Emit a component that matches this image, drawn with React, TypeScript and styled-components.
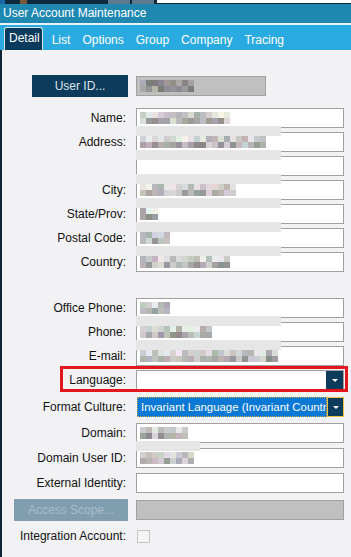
import React from 'react';
import styled, { createGlobalStyle } from 'styled-components';

const GlobalStyle = createGlobalStyle`
	html, body {
		margin: 0;
		padding: 0;
		background: #f2f2f4;
	}
	body {
		font-family: "Liberation Sans", Arial, sans-serif;
		font-size: 12px;
		color: #111;
		width: 351px;
		height: 557px;
		overflow: hidden;
	}
`;

const Window = styled.div`
	width: 351px;
	height: 557px;
	display: flex;
	flex-direction: column;
`;

const TopStrip = styled.div`
	height: 4px;
	background: #0b2a40;
	display: flex;
	align-items: stretch;
`;

const StripItem = styled.div<{ $ml: number; $w: number; $bg: string }>`
	margin-left: ${(p) => p.$ml}px;
	width: ${(p) => p.$w}px;
	background: ${(p) => p.$bg};
	flex: none;
`;

const StripSearch = styled.div`
	margin-left: 3px;
	flex: 1;
	background: #fff;
	border-bottom: 1px solid #0b2a40;
`;

const TitleBar = styled.div`
	height: 19px;
	line-height: 19px;
	background: #1f88b1;
	color: #fff;
	padding-left: 3px;
	font-size: 12px;
`;

const Separator = styled.div`
	height: 2px;
	background: #eaf3f7;
`;

const TabBar = styled.div`
	height: 25px;
	background: #29abe2;
	display: flex;
	align-items: flex-end;
	padding-left: 4px;
`;

const Tab = styled.div<{ $active?: boolean }>`
	height: 23px;
	box-sizing: border-box;
	color: #fff;
	font-size: 12px;
	line-height: 20px;
	padding: ${(p) => (p.$active ? '0 2px 0 4px' : '3px 6px 0')};
	margin-right: ${(p) => (p.$active ? '3px' : '0')};
	background: ${(p) => (p.$active ? '#0a3a5c' : 'transparent')};
	border: ${(p) => (p.$active ? '1px solid #d6e6ef' : 'none')};
	border-bottom: none;
	border-radius: ${(p) => (p.$active ? '3px 3px 0 0' : '0')};
`;

const Content = styled.div`
	flex: 1;
	border-left: 2px solid #0e2436;
	background: #f2f2f4;
	padding: 25px 0 0 12px;
	display: flex;
	flex-direction: column;
	overflow: hidden;
`;

const Row = styled.div<{ $mt?: number; $h?: number }>`
	position: relative;
	display: flex;
	align-items: center;
	gap: 8px;
	margin-top: ${(p) => p.$mt ?? 4}px;
	height: ${(p) => p.$h ?? 20}px;
	flex: none;
`;

const Label = styled.div`
	width: 112px;
	padding-right: 2px;
	text-align: right;
	white-space: nowrap;
	font-size: 12px;
	color: #111;
`;

const Field = styled.div<{ $w?: number; $bg?: string }>`
	position: relative;
	box-sizing: border-box;
	width: ${(p) => p.$w ?? 208}px;
	height: 20px;
	border: 1px solid #a0a0a0;
	background: ${(p) => p.$bg ?? '#fff'};
	display: flex;
	justify-content: flex-end;
`;

const ActionButton = styled.div<{ $disabled?: boolean; $ml?: number; $w: number }>`
	box-sizing: border-box;
	margin-left: ${(p) => p.$ml ?? 0}px;
	width: ${(p) => p.$w}px;
	height: 22px;
	line-height: 22px;
	text-align: center;
	font-size: 12px;
	background: ${(p) => (p.$disabled ? '#809eb0' : '#0d3b5c')};
	color: ${(p) => (p.$disabled ? '#a9bdca' : '#dce6ee')};
`;

const MosaicGrid = styled.div<{ $cols: number; $top: number }>`
	position: absolute;
	left: 3px;
	top: ${(p) => p.$top}px;
	display: grid;
	grid-template-columns: repeat(${(p) => p.$cols}, 6px);
	grid-auto-rows: 6px;
`;

const Cell = styled.span`
	display: block;
`;

const Band = styled.div<{ $w: number }>`
	position: absolute;
	left: -1px;
	top: 17px;
	width: ${(p) => p.$w}px;
	height: 10px;
	background: #e6e6e6;
	z-index: 1;
`;

const DropButton = styled.div<{ $focus?: boolean }>`
	box-sizing: border-box;
	width: 17px;
	height: 100%;
	background: #0d3b5c;
	border: ${(p) => (p.$focus ? '1px solid #efc243' : 'none')};
	display: flex;
	align-items: center;
	justify-content: center;
	flex: none;

	&::after {
		content: '';
		border-left: 3px solid transparent;
		border-right: 3px solid transparent;
		border-top: 3px solid #fff;
	}
`;

const Highlight = styled.div`
	position: absolute;
	left: 46px;
	top: -4px;
	width: 288px;
	height: 26px;
	box-sizing: border-box;
	border: 3px solid #e3161e;
	pointer-events: none;
`;

const Select = styled.div`
	display: flex;
	width: 207px;
	height: 20px;
	margin-left: 1px;
`;

const SelectedText = styled.div`
	box-sizing: border-box;
	width: 190px;
	height: 100%;
	background: #0a78d4;
	border: 1px dotted #c8a848;
	color: #fff;
	font-size: 11.4px;
	line-height: 18px;
	padding-left: 3px;
	white-space: nowrap;
	overflow: hidden;
`;

const Checkbox = styled.div`
	box-sizing: border-box;
	width: 13px;
	height: 13px;
	margin-left: 1px;
	border: 1px solid #c4c4c4;
	background: #f4f4f5;
`;

const rng = (seed: number) => {
	let s = seed * 7919 + 13;
	return () => {
		s = (s * 9301 + 49297) % 233280;
		return s / 233280;
	};
};

const Mosaic = ({ w, seed, dark }: { w: number; seed: number; dark?: boolean }) => {
	const rand = rng(seed);
	const cols = Math.ceil(w / 6);
	const cells: string[] = [];
	for (let r = 0; r < 2; r++) {
		for (let c = 0; c < cols; c++) {
			const base = dark ? 120 + rand() * 60 : r === 0 ? 170 + rand() * 70 : 140 + rand() * 80;
			const tint = () => Math.round(base + rand() * 18 - 9);
			cells.push(`rgb(${tint()}, ${tint()}, ${tint()})`);
		}
	}
	return (
		<MosaicGrid $cols={cols} $top={dark ? 3 : 3}>
			{cells.map((c, i) => (
				<Cell key={i} style={{ background: c }} />
			))}
		</MosaicGrid>
	);
};

type FieldRowProps = { label: string; mt?: number; blur?: number; band?: number; seed?: number };

const FieldRow = ({ label, mt, blur, band, seed = 1 }: FieldRowProps) => (
	<Row $mt={mt}>
		<Label>{label}</Label>
		<Field>
			{blur ? <Mosaic w={blur} seed={seed} /> : null}
			{band ? <Band $w={band} /> : null}
		</Field>
	</Row>
);

const tabs = ['List', 'Options', 'Group', 'Company', 'Tracing'];

const App = () => {
	return (
		<Window>
			<GlobalStyle />
			<TopStrip>
				<StripItem $ml={0} $w={5} $bg="#1766a8" />
				<StripItem $ml={15} $w={7} $bg="#7a5a3a" />
				<StripItem $ml={81} $w={22} $bg="#5c7a90" />
				<StripItem $ml={2} $w={22} $bg="#5c7a90" />
				<StripSearch />
			</TopStrip>
			<TitleBar>User Account Maintenance</TitleBar>
			<Separator />
			<TabBar>
				<Tab $active>Detail</Tab>
				{tabs.map((t) => (
					<Tab key={t}>{t}</Tab>
				))}
			</TabBar>
			<Content>
				<Row $mt={0} $h={22}>
					<ActionButton $ml={18} $w={96}>User ID...</ActionButton>
					<Field $w={130} $bg="#c0c0c0">
						<Mosaic w={54} seed={3} dark />
					</Field>
				</Row>
				<FieldRow label="Name:" mt={11} blur={90} band={145} seed={5} />
				<FieldRow label="Address:" blur={126} band={145} seed={8} />
				<FieldRow label="" band={145} />
				<FieldRow label="City:" blur={96} band={145} seed={11} />
				<FieldRow label="State/Prov:" blur={18} band={145} seed={14} />
				<FieldRow label="Postal Code:" blur={30} band={145} seed={17} />
				<FieldRow label="Country:" blur={90} seed={21} />
				<FieldRow label="Office Phone:" mt={26} blur={30} band={145} seed={24} />
				<FieldRow label="Phone:" blur={72} band={145} seed={27} />
				<FieldRow label="E-mail:" blur={138} seed={31} />
				<Row>
					<Label>Language:</Label>
					<Field>
						<DropButton />
					</Field>
					<Highlight />
				</Row>
				<Row $mt={7}>
					<Label>Format Culture:</Label>
					<Select>
						<SelectedText>Invariant Language (Invariant Country)</SelectedText>
						<DropButton $focus />
					</Select>
				</Row>
				<FieldRow label="Domain:" mt={6} blur={48} band={64} seed={35} />
				<FieldRow label="Domain User ID:" mt={5} blur={54} seed={38} />
				<FieldRow label="External Identity:" mt={5} />
				<Row $mt={6} $h={22}>
					<ActionButton $disabled $w={114}>
						Access Scope...
					</ActionButton>
					<Field $bg="#c0c0c0" />
				</Row>
				<Row $mt={5}>
					<Label>Integration Account:</Label>
					<Checkbox />
				</Row>
			</Content>
		</Window>
	);
};

export default App;
